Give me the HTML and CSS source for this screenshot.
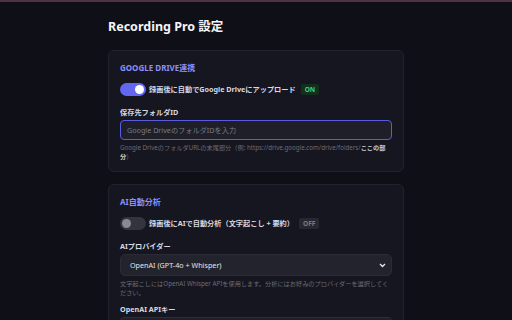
FILE: index.html
```html
<!DOCTYPE html>
<html lang="ja">
<head>
   <meta charset="UTF-8">
   <meta name="viewport" content="width=device-width, initial-scale=1.0">
   <title>Recording Pro 設定</title>
   <link rel="stylesheet" href="styles.css">
</head>
<body>
   <div class="page">
      <h1 class="title">Recording Pro 設定</h1>

      <section class="card">
         <h2 class="card-head">GOOGLE DRIVE連携</h2>
         <div class="switch-row">
            <span class="switch on"><span class="knob"></span></span>
            <span class="switch-label">録画後に自動でGoogle Driveにアップロード</span>
            <span class="badge on">ON</span>
         </div>
         <div class="field">
            <label class="field-label">保存先フォルダID</label>
            <input class="text-input focus" type="text" placeholder="Google DriveのフォルダIDを入力">
            <p class="help">Google DriveのフォルダURLの末尾部分（例: https://drive.google.com/drive/folders/<b>ここの部分</b>）</p>
         </div>
      </section>

      <section class="card">
         <h2 class="card-head">AI自動分析</h2>
         <div class="switch-row">
            <span class="switch"><span class="knob"></span></span>
            <span class="switch-label">録画後にAIで自動分析（文字起こし + 要約）</span>
            <span class="badge">OFF</span>
         </div>
         <div class="field">
            <label class="field-label">AIプロバイダー</label>
            <div class="select">
               <span>OpenAI (GPT-4o + Whisper)</span>
               <svg class="chev" width="7" height="5" viewBox="0 0 7 5"><path d="M1 1l2.5 2.5L6 1" fill="none" stroke="#e5e5ea" stroke-width="1.4"/></svg>
            </div>
            <p class="help">文字起こしにはOpenAI Whisper APIを使用します。分析にはお好みのプロバイダーを選択してください。</p>
         </div>
         <div class="field">
            <label class="field-label">OpenAI APIキー</label>
            <input class="text-input" type="text">
         </div>
      </section>
   </div>
</body>
</html>
```

FILE: styles.css
```css
* {
   box-sizing: border-box;
}

body {
   margin: 0;
   background-color: #0f0f17;
   color: #e4e4ea;
   font-family: "Noto Sans", "Noto Sans CJK JP", sans-serif;
   border-top: 2px solid #4d3440;
   height: 320px;
   overflow: hidden;
}

.page {
   width: 296px;
   margin: 0 auto;
   padding-top: 17px;
}

.title {
   margin: 0 0 15px 0;
   font-size: 12.5px;
   font-weight: 700;
   color: #f4f4f8;
   line-height: 16px;
}

.card {
   background-color: #161620;
   border: 1px solid #23232e;
   border-radius: 6px;
   padding: 11px 11px 10px 11px;
   margin-bottom: 12px;
}

.card-head {
   margin: 0 0 8px 0;
   font-size: 8px;
   font-weight: 700;
   line-height: 12px;
   color: #8d8ff6;
}

.switch-row {
   display: flex;
   align-items: center;
   height: 14px;
   margin-bottom: 11px;
}

.switch {
   position: relative;
   width: 26px;
   height: 13px;
   border-radius: 7px;
   background-color: #34343e;
   flex-shrink: 0;
}

.switch .knob {
   position: absolute;
   top: 2px;
   left: 2px;
   width: 9px;
   height: 9px;
   border-radius: 50%;
   background-color: #8a8a92;
}

.switch.on {
   background-color: #6366f1;
}

.switch.on .knob {
   left: 15px;
   background-color: #ffffff;
}

.switch-label {
   margin-left: 3px;
   font-size: 7.2px;
   font-weight: 700;
   color: #d8d8e0;
}

.badge {
   margin-left: 5px;
   padding: 0 4px;
   height: 11px;
   line-height: 11px;
   border-radius: 2px;
   font-size: 6.5px;
   font-weight: 700;
   background-color: #272730;
   color: #7b7b84;
}

.badge.on {
   background-color: #13301f;
   color: #3fcf7a;
}

.field {
   margin-bottom: 7px;
}

.field:last-child {
   margin-bottom: 0;
}

.field-label {
   display: block;
   font-size: 7.2px;
   font-weight: 700;
   line-height: 10px;
   color: #d8d8e0;
   margin-bottom: 3px;
}

.text-input {
   display: block;
   width: 100%;
   height: 20px;
   padding: 0 6px;
   border: 1px solid #2e2e3a;
   border-radius: 4px;
   background-color: #1f1f29;
   color: #e4e4ea;
   font: 7.2px "Noto Sans", "Noto Sans CJK JP", sans-serif;
   outline: none;
}

.text-input.focus {
   border-color: #5a5ce0;
}

.text-input::placeholder {
   color: #7a7a84;
}

.select {
   display: flex;
   align-items: center;
   justify-content: space-between;
   height: 22px;
   padding: 0 5px 0 9px;
   border: 1px solid #2b2b36;
   border-radius: 5px;
   background-color: #23232d;
   font-size: 7.2px;
   color: #e4e4ea;
}

.help {
   margin: 3px 0 0 0;
   font-size: 6.2px;
   line-height: 9px;
   color: #6c6c75;
}

.help b {
   color: #cfcfd6;
}
```
